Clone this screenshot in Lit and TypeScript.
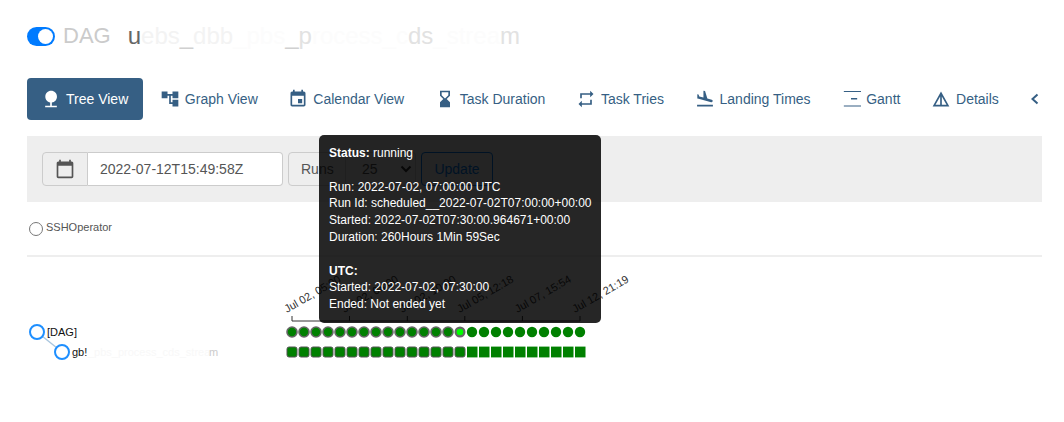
import { LitElement, html, css, svg } from "lit";
import { customElement } from "lit/decorators.js";

const ICONS: Record<string, string> = {
  tree: "M13 16.12c3.47-.41 6.17-3.36 6.17-6.95 0-3.87-3.13-7-7-7s-7 3.13-7 7c0 3.47 2.52 6.34 5.83 6.89V20H5v2h14v-2h-6v-3.88z",
  graph: "M22 11V3h-7v3H9V3H2v8h7V8h2v10h4v3h7v-8h-7v3h-2V8h2v3z",
  calendar:
    "M17 12h-5v5h5v-5zM16 1v2H8V1H6v2H5c-1.11 0-1.99.9-1.99 2L3 19c0 1.1.89 2 2 2h14c1.1 0 2-.9 2-2V5c0-1.1-.9-2-2-2h-1V1h-2zm3 18H5V8h14v11z",
  today: "M20 3h-1V1h-2v2H7V1H5v2H4c-1.1 0-2 .9-2 2v16c0 1.1.9 2 2 2h16c1.1 0 2-.9 2-2V5c0-1.1-.9-2-2-2zm0 18H4V8h16v13z",
  hourglass: "M18 22l-.01-6L14 12l3.99-4.01L18 2H6v6l4 4-4 3.99V22h12zM8 7.5V4h8v3.5l-4 4-4-4z",
  repeat: "M7 7h10v3l4-4-4-4v3H5v6h2V7zm10 10H7v-3l-4 4 4 4v-3h12v-6h-2v4z",
  landing:
    "M2.5 19h19v2h-19zm7.18-5.73l4.35 1.16 5.31 1.42c.8.21 1.62-.26 1.84-1.06.21-.8-.26-1.62-1.06-1.84l-5.31-1.42-2.76-9.02L10.12 2v8.28L5.15 8.95l-.93-2.32-1.45-.39v5.17l1.6.43 5.31 1.43z",
  gantt: "M3.4 2.4H24v1.3H3.4zM3.4 19.8H24v1.3H3.4zM12 10.8h7.4v1.8H12z",
  details: "M12 3L2 21h20L12 3zm1 5.92L18.6 19H13V8.92zm-2 0V19H5.4L11 8.92z",
};

const NAV = [
  { label: "Tree View", icon: "tree", active: true },
  { label: "Graph View", icon: "graph" },
  { label: "Calendar View", icon: "calendar" },
  { label: "Task Duration", icon: "hourglass" },
  { label: "Task Tries", icon: "repeat" },
  { label: "Landing Times", icon: "landing" },
  { label: "Gantt", icon: "gantt" },
  { label: "Details", icon: "details" },
];

const TICKS = [
  { x: 265, label: "Jul 02, 05:00" },
  { x: 322.5, label: "Jul 02, 08:00" },
  { x: 380.3, label: "Jul 02, 10:00" },
  { x: 437.8, label: "Jul 05, 12:18" },
  { x: 495.4, label: "Jul 07, 15:54" },
  { x: 553, label: "Jul 12, 21:19" },
];

const RUNS = Array.from({ length: 25 }, (_, i) => i);

function icon(name: string) {
  return html`<svg class="icon" viewBox="0 0 24 24"><path d=${ICONS[name]} /></svg>`;
}

@customElement("app-root")
export class AppRoot extends LitElement {
  static styles = css`
    :host {
      display: block;
      position: relative;
      height: 422px;
      overflow: hidden;
      padding: 0 22px 0 27px;
      font-family: "Liberation Sans", Arial, sans-serif;
      font-size: 14px;
      color: #333;
    }
    .title {
      display: flex;
      align-items: center;
      height: 72px;
    }
    .toggle {
      width: 28px;
      height: 19px;
      border-radius: 10px;
      background: #007bff;
      display: flex;
      justify-content: flex-end;
      align-items: center;
      padding-right: 2px;
      box-sizing: border-box;
    }
    .knob {
      width: 15px;
      height: 15px;
      border-radius: 50%;
      background: #fff;
    }
    .dag {
      margin-left: 8px;
      font-size: 22px;
      color: #cbcbcb;
    }
    .name {
      margin-left: 17px;
      font-size: 24px;
      color: #fcfcfc;
      white-space: nowrap;
    }
    .name .d { color: #666; }
    .name .m { color: #e2e2e2; }
    .name .l { color: #f3f3f3; }
    .name .u { color: #d0d0d0; }
    .nav {
      display: flex;
      align-items: center;
      gap: 2.6px;
      height: 42px;
      margin-top: 6px;
    }
    .pill {
      display: flex;
      align-items: center;
      gap: 5px;
      height: 42px;
      padding: 0 14px;
      box-sizing: border-box;
      border-radius: 4px;
      color: #365f84;
      white-space: nowrap;
    }
    .pill.active {
      background: #365f84;
      color: #fff;
      padding-right: 15px;
    }
    .icon {
      width: 20px;
      height: 20px;
      fill: currentColor;
      flex: none;
    }
    .chev {
      width: 10px;
      height: 12px;
      margin-left: 15px;
      fill: none;
      stroke: #365f84;
      stroke-width: 2;
    }
    .band {
      display: flex;
      gap: 5px;
      align-items: stretch;
      height: 66px;
      box-sizing: border-box;
      margin-top: 16px;
      padding: 16px 15px;
      background: #eee;
    }
    .group {
      display: flex;
      height: 34px;
    }
    .addon {
      display: flex;
      align-items: center;
      box-sizing: border-box;
      background: #eee;
      border: 1px solid #ccc;
      border-radius: 4px 0 0 4px;
      color: #555;
    }
    .addon.cal {
      width: 46px;
      justify-content: center;
    }
    .addon.runs {
      width: 58px;
      padding-left: 12px;
    }
    .input {
      display: flex;
      align-items: center;
      width: 195px;
      box-sizing: border-box;
      padding-left: 12px;
      background: #fff;
      border: 1px solid #ccc;
      border-left: 0;
      border-radius: 0 4px 4px 0;
      color: #555;
    }
    .select {
      display: flex;
      align-items: center;
      justify-content: space-between;
      width: 70px;
      box-sizing: border-box;
      padding: 0 3px 0 16px;
      color: #555;
      border: 1px solid #ccc;
      border-left: 0;
      border-radius: 0 4px 4px 0;
      background: #eee;
    }
    .update {
      width: 72px;
      height: 34px;
      box-sizing: border-box;
      border: 1px solid #017cee;
      border-radius: 4px;
      display: flex;
      align-items: center;
      justify-content: center;
      color: #017cee;
    }
    .legend {
      display: flex;
      align-items: center;
      gap: 3px;
      height: 53px;
      padding-left: 2px;
      border-bottom: 2px solid #eee;
      font-size: 11px;
      color: #555;
    }
    .dot {
      width: 14px;
      height: 14px;
      box-sizing: border-box;
      border: 1px solid #777;
      border-radius: 50%;
      background: #fff;
    }
    .legend span:last-child {
      margin-top: -3px;
    }
    .tree {
      display: block;
      width: 1015px;
      height: 130px;
      font-family: "Liberation Sans", Arial, sans-serif;
      font-size: 11px;
    }
    .tooltip {
      position: absolute;
      left: 319px;
      top: 135px;
      width: 282px;
      height: 188px;
      box-sizing: border-box;
      padding: 10px;
      border-radius: 5px;
      background: rgba(0, 0, 0, 0.85);
      color: #fff;
      font-size: 12px;
      line-height: 16.8px;
      white-space: nowrap;
    }
  `;

  renderTree() {
    return svg`
      <line x1="10" y1="75" x2="35" y2="95" stroke="#a9c6de" stroke-width="1.5" />
      <circle cx="10" cy="75" r="7" fill="#fff" stroke="#1e8fff" stroke-width="2" />
      <circle cx="35" cy="95" r="7" fill="#fff" stroke="#1e8fff" stroke-width="2" />
      <text x="20" y="79" fill="#111">[DAG]</text>
      <text x="45" y="99" fill="#111">gb!</text>
      <text x="61" y="99" fill="#f8f8f8">_pbs_process_cds_strea</text>
      <text x="182" y="99" fill="#ccc">m</text>

      <path d="M265 59V64H553V59" fill="none" stroke="#333" />
      ${TICKS.slice(1, 5).map((t) => svg`<line x1=${t.x} x2=${t.x} y1="59" y2="64" stroke="#333" />`)}
      ${TICKS.map(
        (t) => svg`<text transform="translate(${t.x - 5} 56) rotate(-30)" fill="#333">${t.label}</text>`
      )}

      ${RUNS.map((i) => {
        const x = 265 + i * 12;
        if (i < 14) {
          return svg`
            <circle cx=${x} cy="75" r="5" fill="green" stroke="#666" stroke-width="1.6" />
            <rect x=${x - 5} y="90" width="10" height="10" rx="2" fill="green" stroke="#555" />
          `;
        }
        if (i === 14) {
          return svg`
            <circle cx=${x} cy="75" r="4.4" fill="#00ff00" stroke="#666" stroke-width="2.2" />
            <rect x=${x - 5} y="90" width="10" height="10" rx="2" fill="green" stroke="#555" />
          `;
        }
        return svg`
          <circle cx=${x} cy="75" r="5.2" fill="green" />
          <rect x=${x - 5} y="89.6" width="10.5" height="10.8" fill="green" />
        `;
      })}
    `;
  }

  render() {
    return html`
      <div class="title">
        <div class="toggle"><div class="knob"></div></div>
        <span class="dag">DAG</span>
        <span class="name"
          ><span class="d">u</span><span class="l">ebs</span><span class="u">_</span><span class="l">dbb</span
          >_pbs<span class="u">_</span><span class="m">p</span>rocess_c<span class="m">ds</span>_strea<span class="m"
            >m</span
          ></span
        >
      </div>

      <nav class="nav">
        ${NAV.map(
          (n) => html`<div class="pill ${n.active ? "active" : ""}">${icon(n.icon)}<span>${n.label}</span></div>`
        )}
        <svg class="chev" viewBox="0 0 10 12"><path d="M7.5 1.5L2.5 6l5 4.5" /></svg>
      </nav>

      <div class="band">
        <div class="group">
          <div class="addon cal">${icon("today")}</div>
          <div class="input">2022-07-12T15:49:58Z</div>
        </div>
        <div class="group">
          <div class="addon runs">Runs</div>
          <div class="select">
            <span>25</span>
            <svg width="12" height="8" viewBox="0 0 12 8" fill="none" stroke="#333" stroke-width="2">
              <path d="M1.5 1.5L6 6l4.5-4.5" />
            </svg>
          </div>
        </div>
        <div class="update">Update</div>
      </div>

      <div class="legend"><span class="dot"></span><span>SSHOperator</span></div>

      <svg class="tree">${this.renderTree()}</svg>

      <div class="tooltip">
        <strong>Status:</strong> running<br /><br />
        Run: 2022-07-02, 07:00:00 UTC<br />
        Run Id: scheduled__2022-07-02T07:00:00+00:00<br />
        Started: 2022-07-02T07:30:00.964671+00:00<br />
        Duration: 260Hours 1Min 59Sec<br /><br />
        <strong>UTC:</strong><br />
        Started: 2022-07-02, 07:30:00<br />
        Ended: Not ended yet
      </div>
    `;
  }
}
